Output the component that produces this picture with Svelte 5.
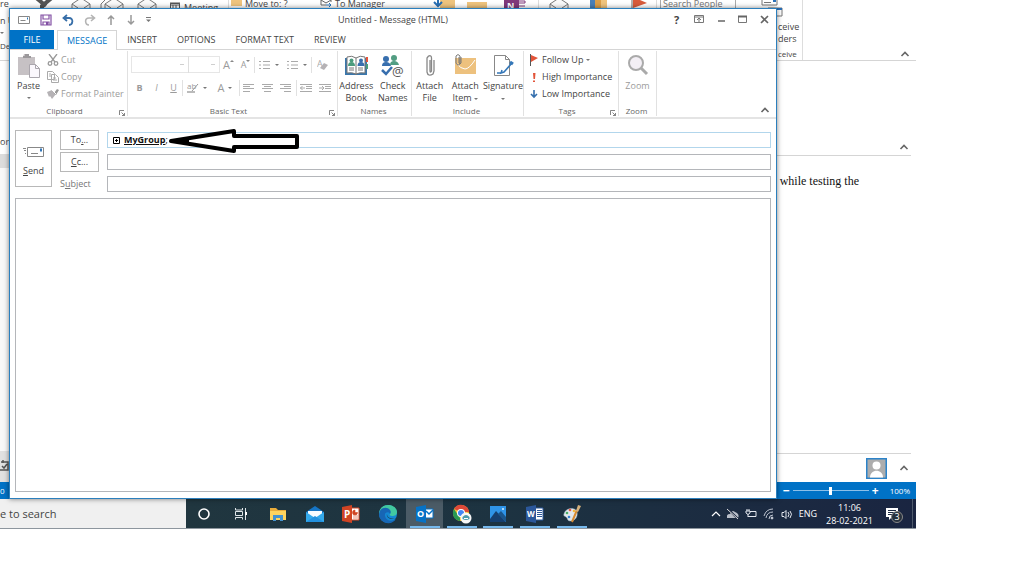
<script lang="ts">
  type App = { name: string; open?: boolean; active?: boolean };

  const tabs = ["MESSAGE", "INSERT", "OPTIONS", "FORMAT TEXT", "REVIEW"];
  const apps: App[] = [
    { name: "Cortana" },
    { name: "Task View" },
    { name: "Explorer" },
    { name: "Mail" },
    { name: "PowerPoint" },
    { name: "Edge" },
    { name: "Outlook", open: true, active: true },
    { name: "Chrome", open: true },
    { name: "Photos", open: true },
    { name: "Word", open: true },
    { name: "Paint", open: true },
  ];

  let cc = $state("");
  let subject = $state("");
  let message = $state("");
  let zoom = $state(50);
</script>

{#snippet caret()}
  <svg class="caret" width="4" height="2" viewBox="0 0 4 2"><path d="M0 0h4L2 2z" fill="#777" /></svg>
{/snippet}

{#snippet chevron()}
  <svg width="10" height="6" viewBox="0 0 10 6"><path d="M1.500 5L5 1.500 8.500 5" fill="none" stroke="currentColor" stroke-width="1.600" /></svg>
{/snippet}

{#snippet launcher()}
  <svg width="6" height="6" viewBox="0 0 6 6" fill="none" stroke="currentColor" stroke-width="0.800"><path d="M.5 5V.5H5M2.500 2.500l3 3M5.500 3v2.500H3" /></svg>
{/snippet}

{#snippet lines(kind: string)}
  <svg width="12" height="10" viewBox="0 0 12 10" fill="none" stroke="#aaa">
    {#if kind === "center"}
      <path d="M0 1.500h11M2 3.500h7M0 5.500h11M2 8.500h7" />
    {:else if kind === "right"}
      <path d="M0 1.500h11M4 3.500h7M0 5.500h11M4 8.500h7" />
    {:else if kind === "left"}
      <path d="M0 1.500h11M0 3.500h7M0 5.500h11M0 8.500h7" />
    {:else if kind === "list"}
      <path d="M0 1.500h2M4 1.500h7M0 5h2M4 5h7M0 8.500h2M4 8.500h7" />
    {:else if kind === "outdent"}
      <path d="M0 1.500h12M6 3.500h6M6 5.500h6M0 8.500h12M0 5h5M2.500 3l-2 2 2 2" />
    {:else}
      <path d="M0 1.500h12M6 3.500h6M6 5.500h6M0 8.500h12M0 5h5M3 3l2 2-2 2" />
    {/if}
  </svg>
{/snippet}

{#snippet appIcon(name: string)}
  <svg width="20" height="20" viewBox="0 0 20 20">
    {#if name === "Cortana"}
      <circle cx="10" cy="10" r="5" fill="none" stroke="#fff" stroke-width="1.600" />
    {:else if name === "Task View"}
      <path d="M4.500 4v2h7V4M4.500 15.500v-2h7v2M4.500 7.500h7v4h-7zM14.500 4v12" fill="none" stroke="#dfe5e8" />
      <path d="M14 8h2v3h-2z" fill="#fff" />
    {:else if name === "Explorer"}
      <path d="M2 4h6l2 2h8v10H2z" fill="#e9ad3b" />
      <path d="M2 7h16v9H2z" fill="#ffd45e" />
      <path d="M5 17v-6h10v6h-3v-3H8v3z" fill="#4593cf" />
    {:else if name === "Mail"}
      <path d="M1 8l9-6 9 6v10H1z" fill="#1675c5" />
      <path d="M3 7h14v7H3z" fill="#f7fbff" />
      <path d="M1 8l9 6 9-6v10H1z" fill="#34a9eb" />
      <path d="M1 18l9-6 9 6z" fill="#2391df" />
    {:else if name === "PowerPoint"}
      <path d="M10 4h8v12h-8z" fill="#fff" stroke="#d04424" />
      <path d="M14 6a2.500 2.500 0 1 0 2.500 2.500H14zM12 12h5M12 14h5" fill="#d04424" stroke="#d04424" stroke-width="0.600" />
      <path d="M1 3l10-2v18L1 17z" fill="#d04424" />
      <text x="3" y="14" font-size="10" font-weight="700" fill="#fff">P</text>
    {:else if name === "Edge"}
      <circle cx="10" cy="10" r="9" fill="#1588d3" />
      <path d="M1 11C1 4 5 1 10 1s9 3 9 7c0 3-2 4-5 4-2 0-3-1-2-2 1-2-1-4-4-3-3 0-6 2-7 4z" fill="#42c8a0" />
      <path d="M1 10c1-7 8-8 11-4 1 1 1 3 0 4-1-3-6-2-5 2 1 5 7 6 11 3-4 7-17 5-17-5z" fill="#1766b5" />
      <path d="M9 10c0 4 4 5 8 4-4 2-9 0-8-4z" fill="#1b3743" />
    {:else if name === "Outlook"}
      <path d="M10 5h8v9h-8z" fill="#fff" stroke="#0672c6" />
      <path d="M11 7l3 3 4-4" fill="none" stroke="#0672c6" stroke-width="1.500" />
      <path d="M1 3l10-2v18L1 17z" fill="#0672c6" />
      <text x="2" y="13" font-size="9" font-weight="700" fill="#fff">O</text>
    {:else if name === "Chrome"}
      <circle cx="9" cy="9" r="8" fill="#f4c12f" />
      <path d="M2 5a8 8 0 0 1 15 3H9z" fill="#df4939" />
      <path d="M2 5l6 9v3A8 8 0 0 1 2 5z" fill="#299954" />
      <circle cx="9" cy="9" r="4" fill="#fff" />
      <circle cx="9" cy="9" r="3" fill="#4285f4" />
      <circle cx="14" cy="14" r="5.500" fill="#f7f7f7" />
      <path d="M10.500 13q3.500-4 7 0v2q-3.500 2-7 0z" fill="#4a9bac" />
      <path d="M12 14.500h4" stroke="#fff" />
    {:else if name === "Photos"}
      <path d="M2 2h16v16H2z" fill="#2f94e8" />
      <path d="M2 15l6-8 10 11H2z" fill="#163f70" />
      <path d="M10 10l3-3 5 6v5z" fill="#1b568c" />
      <circle cx="15" cy="5" r="1" fill="#d8efff" />
    {:else if name === "Word"}
      <path d="M9 4h9v12H9z" fill="#fff" stroke="#2b579a" />
      <path d="M12 6.500h5M12 8.500h5M12 10.500h5M12 12.500h5" stroke="#2b579a" />
      <path d="M1 3l10-2v18L1 17z" fill="#2b579a" />
      <text x="2" y="13" font-size="8" font-weight="700" fill="#fff">W</text>
    {:else}
      <path d="M2 10c1-6 11-8 13-2 1 5-2 9-7 9-3 0-2-3-4-4-1-1-3-1-2-3z" fill="#e3e8ec" stroke="#90acbd" stroke-width="0.500" />
      <circle cx="5" cy="9" r="1.300" fill="#4aae68" /><circle cx="8" cy="6" r="1.300" fill="#e85a47" />
      <circle cx="12" cy="7" r="1.300" fill="#f3b93e" /><circle cx="7" cy="13" r="1.300" fill="#347fd0" />
      <path d="M10 18l5-12" stroke="#d78a31" stroke-width="2" /><path d="M14 7l2-6 3 1-3 6z" fill="#d6b17d" />
    {/if}
  </svg>
{/snippet}

<div class="screen">
  <div class="workspace">
    <div class="outlook">
      <div class="back-ribbon">
        <div class="back-left"><span>re</span><span>n U</span>{@render caret()}<small>De</small></div>
        <svg class="back-delete" width="24" height="10" viewBox="0 0 24 10"><path d="M2-4l12 10M22-4L10 6v6" fill="none" stroke="#555" stroke-width="4" /></svg>
        <svg class="back-envelopes" width="92" height="10" viewBox="0 0 92 10" fill="#fafafa" stroke="#777"><path d="M2 12V4l9-6 9 6v8M2 4l6 4M20 4l-6 4M35 12V4l9-6 9 6v8M31 10V4l5-5M35 4l6 4M53 4l-6 4M68 12V4l9-6 9 6v8M68 4l6 4M86 4l-6 4" /></svg>
        <span class="back-meeting"><svg width="10" height="8" viewBox="0 0 10 8"><path d="M.5 1.500h9V8h-9zM0 1h10v2H0zM3 3v5M6 3v5" fill="none" stroke="#555" /></svg>Meeting</span>
        <span class="back-move"><svg width="11" height="8" viewBox="0 0 11 8"><path d="M0 0h11v6H0z" fill="#efc47e" /></svg>Move to: ?</span>
        <span class="back-manager"><svg width="12" height="8" viewBox="0 0 12 8"><path d="M1 0v5h5M1 0l5 3 5-3v2" fill="none" stroke="#666" /><path d="M6 5h5M9 3l2 2-2 2" fill="none" stroke="#2673b9" /></svg>To Manager</span>
        <svg class="back-icons" width="228" height="10" viewBox="0 0 228 10">
          <path d="M8 0h15v8H8zM35 2h20v6H35z" fill="#efc47e" /><path d="M6 0v6M2 2l4 4 4-4" fill="none" stroke="#286fb4" stroke-width="2" />
          <path d="M72 0h15v10H72z" fill="#80397b" /><text x="75" y="9" font-size="9" font-weight="700" fill="#fff">N</text><path d="M87 1h6v2h-6m0 3h6" fill="none" stroke="#80397b" />
          <path d="M118 10V4l9-6 9 6v6M118 4l6 4M136 4l-6 4" fill="#fafafa" stroke="#777" />
          <path d="M158 0h5v10h-5z" fill="#4a80b8" /><path d="M163 0h6v10h-6z" fill="#dc9f49" /><path d="M169 0h6v10h-6z" fill="#efc47e" />
          <path d="M200 0v10" stroke="#666" /><path d="M201-3l14 6-14 5z" fill="#d85b3c" /><path d="M106.500 0v10M224.500 0v10" stroke="#ddd" />
        </svg>
        <input class="people-search" aria-label="Search People" placeholder="Search People" />
        <div class="back-receive">
          <svg width="22" height="17" viewBox="0 0 22 17"><path d="M1 0v5h15V0M3 2.500h7M7 8v8h14V8z" fill="#fff" stroke="#777" /><path d="M12 1h3M7 9h14" stroke="#2b70b8" stroke-width="2" /></svg>
          <span>ceive</span><span>ders</span><small>ceive</small>
        </div>
        <button class="collapse" aria-label="Collapse">{@render chevron()}</button>
      </div>
      <div class="back-main">
        <div class="folders"><span>or</span></div>
        <article>
          <header><button class="collapse" aria-label="Collapse">{@render chevron()}</button></header>
          <p>while testing the</p>
          <footer>
            <svg class="avatar" width="21" height="21" viewBox="0 0 21 21"><path d="M0 0h21v21H0z" fill="#2c83c9" /><path d="M1.500 1.500h18v18h-18z" fill="#adadad" /><circle cx="10.500" cy="7.500" r="4" fill="#fff" /><path d="M4 19.500c0-9 13-9 13 0z" fill="#fff" /></svg>
            <button class="collapse" aria-label="Expand">{@render chevron()}</button>
          </footer>
        </article>
      </div>
      <div class="nav-icon"><svg width="10" height="12" viewBox="0 0 10 12"><path d="M1 2h7v8H0M2 6l2 2 3-4M3 0v3" fill="none" stroke="#555" stroke-width="1.500" /></svg></div>
      <div class="status"><span class="count">0</span><b>−</b><input type="range" aria-label="Zoom level" bind:value={zoom} /><b>+</b><span>100%</span></div>
    </div>

    <main class="compose">
      <header class="titlebar">
        <div class="quick">
          <svg width="12" height="10" viewBox="0 0 12 10" fill="none" stroke="#888"><path d="M.5 1.500h11v7H.5zM2.500 5.500h5" /><path d="M9 3.500h1" stroke="#2474b9" stroke-width="2" /></svg>
          <button aria-label="Save"><svg width="12" height="12" viewBox="0 0 12 12"><path d="M1 1h10v10H1zM3 1v4h6V1M3 11V8h6v3" fill="none" stroke="#8351a4" stroke-width="1.200" /><path d="M6 8h2v3H6z" fill="#8351a4" /></svg></button>
          <button aria-label="Undo"><svg width="12" height="12" viewBox="0 0 12 12" fill="none" stroke="#386fa9" stroke-width="1.800"><path d="M5 1L1.500 4 5 7M2 4h5c5 0 4 7 0 7" /></svg></button>
          <button aria-label="Redo"><svg width="12" height="12" viewBox="0 0 12 12" fill="none" stroke="#b4b4b4" stroke-width="1.600"><path d="M7 1l3.500 3L7 7M10 4H5c-5 0-4 7 0 7" /></svg></button>
          <button aria-label="Previous"><svg width="10" height="12" viewBox="0 0 10 12" fill="none" stroke="#999" stroke-width="1.500"><path d="M5 11V2M2 5l3-3 3 3" /></svg></button>
          <button aria-label="Next"><svg width="10" height="12" viewBox="0 0 10 12" fill="none" stroke="#999" stroke-width="1.500"><path d="M5 1v9M2 7l3 3 3-3" /></svg></button>
          <button aria-label="Customize"><svg width="5" height="5" viewBox="0 0 5 5"><path d="M0 .5h5" stroke="#777" /><path d="M0 2.500h5L2.500 5z" fill="#777" /></svg></button>
        </div>
        <h1>Untitled - Message (HTML)</h1>
        <div class="window-buttons">
          <button aria-label="Help"><b>?</b></button>
          <button aria-label="Ribbon options"><svg width="10" height="9" viewBox="0 0 10 9" fill="none" stroke="#777"><path d="M.5.5h9v7h-9zM0 2h10M3 5l2-2 2 2M5 3v4" /></svg></button>
          <button aria-label="Minimize"><svg width="8" height="9" viewBox="0 0 8 9"><path d="M1 6h7" stroke="#666" stroke-width="1.500" /></svg></button>
          <button aria-label="Maximize"><svg width="9" height="9" viewBox="0 0 9 9"><path d="M.5 1v6.500h8V1" fill="none" stroke="#777" /><path d="M0 1.500h9" stroke="#666" stroke-width="2" /></svg></button>
          <button aria-label="Close"><svg width="9" height="9" viewBox="0 0 9 9"><path d="M1 1l7 7M8 1L1 8" stroke="#666" stroke-width="1.600" /></svg></button>
        </div>
      </header>

      <nav>
        <button class="file">FILE</button>
        {#each tabs as tab, i}
          <button class="tab" class:selected={i === 0}>{tab}</button>
        {/each}
      </nav>

      <section class="ribbon">
        <div class="group clipboard">
          <div class="tools disabled">
            <button class="large paste">
              <svg width="22" height="24" viewBox="0 0 22 24"><path d="M0 3h5l1-3h4l1 3h6v18H0z" fill="#c6c1c4" /><path d="M5 4V2h2V0h4v2h2v2z" fill="#9b989b" /><path d="M11.500 10.500h6l4 4v9h-10z" fill="#faf7fc" stroke="#aaa6ad" /><path d="M17.500 10.500v4h4" fill="none" stroke="#aaa6ad" /></svg>
              <span>Paste</span>{@render caret()}
            </button>
            <div class="stack">
              <button><svg width="12" height="12" viewBox="0 0 12 12" fill="none" stroke="#999" stroke-width="1.300"><path d="M2 0l6 8M10 0L4 8" /><circle cx="3" cy="9.500" r="1.800" /><circle cx="9" cy="9.500" r="1.800" /></svg>Cut</button>
              <button><svg width="12" height="12" viewBox="0 0 12 12" fill="#fff" stroke="#aaa"><path d="M.5.5h5l2 2v6h-7zM4.500 3.500h4l3 3v5h-7zM2 3h2M2 5h2M6 7h3M6 9h4" /></svg>Copy</button>
              <button><svg width="12" height="12" viewBox="0 0 12 12"><path d="M0 4l5-2 4 4-4 5-2-3-1 1z" fill="#b5b2b5" /><path d="M7 5l3-4 2 1-3 5z" fill="#999" /><path d="M5 2l4 4" stroke="#fff" /></svg>Format Painter</button>
            </div>
          </div>
          <div class="caption"><span>Clipboard</span>{@render launcher()}</div>
        </div>

        <div class="group basic">
          <div class="tools disabled text-tools">
            <div class="row">
              <select class="font" aria-label="Font" disabled><option></option></select><select class="size" aria-label="Font size" disabled><option></option></select>
              <button class="letter glyph" aria-label="Grow font">A<svg width="4" height="10" viewBox="0 0 4 10"><path d="M0 2h4L2 0z" fill="#888" /></svg></button>
              <button class="letter glyph small" aria-label="Shrink font">A<svg width="4" height="10" viewBox="0 0 4 10"><path d="M0 0h4L2 2z" fill="#888" /></svg></button>
              <i></i><button class="wide" aria-label="Bullets">{@render lines("list")}{@render caret()}</button><button class="wide" aria-label="Numbering">{@render lines("list")}{@render caret()}</button><i></i>
              <button aria-label="Clear formatting"><svg width="12" height="12" viewBox="0 0 12 12"><text x="0" y="8" font-size="9" fill="#aaa">A</text><path d="M3 9l4-5 4 2-4 5z" fill="#b5b2b5" /></svg></button>
            </div>
            <div class="row">
              <button class="letter"><b>B</b></button><button class="letter"><em>I</em></button><button class="letter"><u>U</u></button><i></i>
              <button class="wide" aria-label="Highlight"><svg width="12" height="12" viewBox="0 0 12 12"><text x="0" y="7" font-size="8" fill="#999">ab</text><path d="M11 2L5 9" stroke="#999" /><path d="M0 10h8" stroke="#bbb" stroke-width="2" /></svg>{@render caret()}</button>
              <button class="wide glyph"><span>A</span>{@render caret()}</button><i></i>
              <button aria-label="Align left">{@render lines("left")}</button><button aria-label="Center">{@render lines("center")}</button><button aria-label="Align right">{@render lines("right")}</button><i></i>
              <button aria-label="Decrease indent">{@render lines("outdent")}</button><button aria-label="Increase indent">{@render lines("indent")}</button>
            </div>
          </div>
          <div class="caption"><span>Basic Text</span>{@render launcher()}</div>
        </div>

        <div class="group names">
          <div class="tools">
            <button class="large"><svg width="24" height="24" viewBox="0 0 24 24"><path d="M1 4h22v17H1z" fill="#3a77ac" /><path d="M3 3q5-2 9 1 4-3 9-1v16q-5-1-9 1-4-2-9-1z" fill="#fff" stroke="#777" /><path d="M12 4v17M5 14h5M5 16h5M14 14h5M14 16h5" stroke="#777" /><circle cx="7.500" cy="6.500" r="2" fill="#4b9c7d" /><path d="M4 12q0-4 3.500-4t3.500 4z" fill="#4b9c7d" /><circle cx="17" cy="6.500" r="2" fill="#386fae" /><path d="M13.500 12q0-4 3.500-4t3.500 4z" fill="#386fae" /><path d="M23 3v5" stroke="#e3533b" stroke-width="2" /><path d="M23 10v5" stroke="#4b9c7d" stroke-width="2" /></svg><span>Address<br />Book</span></button>
            <button class="large"><svg width="24" height="24" viewBox="0 0 24 24"><circle cx="5" cy="5" r="3" fill="#386fae" /><path d="M1 12q0-4 4-4t5 4z" fill="#386fae" /><circle cx="13" cy="4" r="3" fill="#529d82" /><path d="M9 11q0-4 4-4t5 4z" fill="#529d82" /><path d="M1 16l4 4 6-7" fill="none" stroke="#386fae" stroke-width="2.500" /><text x="11" y="22" font-size="13" fill="#555">@</text></svg><span>Check<br />Names</span></button>
          </div>
          <div class="caption"><span>Names</span></div>
        </div>

        <div class="group include">
          <div class="tools">
            <button class="large"><svg width="24" height="24" viewBox="0 0 24 24" fill="none" stroke="#888" stroke-width="1.300"><path d="M12 6v11q0 2 1.500 0V4q0-3-3-2L9 4v14q1 5 6 2l1-3V6" /></svg><span>Attach<br />File</span></button>
            <button class="large"><svg width="24" height="24" viewBox="0 0 24 24" fill="none"><path d="M2 4h21v16H2z" fill="#edc17e" /><path d="M3 9q5 6 9 6t10-9" stroke="#fff" /><path d="M6 3v6q1 2 1-1V2q-2-3-4 0v7q2 4 5 0V3" stroke="#777" /></svg><span>Attach<br />Item {@render caret()}</span></button>
            <button class="large"><svg width="24" height="24" viewBox="0 0 24 24" fill="none"><path d="M3.500 1.500h11l4 4v16h-15zM14.500 1.500v4h4" fill="#fff" stroke="#888" /><path d="M21 9l-8 9-3 1 1-3M6 19h5" stroke="#3477b8" stroke-width="1.500" /><path d="M19 8l3 2" stroke="#3477b8" stroke-width="3" /></svg><span>Signature<br />{@render caret()}</span></button>
          </div>
          <div class="caption"><span>Include</span></div>
        </div>

        <div class="group tags">
          <div class="tools stack">
            <button><svg width="8" height="12" viewBox="0 0 8 12"><path d="M.5 0v12" stroke="#555" /><path d="M1 1l7 3-7 4z" fill="#e25439" /></svg><span>Follow Up {@render caret()}</span></button>
            <button><svg width="8" height="12" viewBox="0 0 8 12"><path d="M3 2h2.500L5 8H3.500zM3 9.500h2V11H3z" fill="#e25439" /></svg>High Importance</button>
            <button><svg width="8" height="12" viewBox="0 0 8 12"><path d="M4 2v7M1 6l3 3 3-3" fill="none" stroke="#356fad" stroke-width="1.600" /></svg>Low Importance</button>
          </div>
          <div class="caption"><span>Tags</span>{@render launcher()}</div>
        </div>

        <div class="group zoom">
          <div class="tools disabled">
            <button class="large"><svg width="24" height="24" viewBox="0 0 24 24"><circle cx="10" cy="9" r="7" fill="#f3eff5" stroke="#aaa" stroke-width="2" /><path d="M15 14l6 6" stroke="#aaa" stroke-width="3" /></svg><span>Zoom</span></button>
          </div>
          <div class="caption"><span>Zoom</span></div>
        </div>
        <button class="collapse" aria-label="Collapse ribbon">{@render chevron()}</button>
      </section>

      <form>
        <div class="address">
          <button type="button" class="send">
            <svg width="22" height="14" viewBox="0 0 22 14" fill="none" stroke="#888"><path d="M4.500 2.500h16v9h-16zM8 8.500h7M0 3.500h3M1 5.500h2M2 8.500h1" /><path d="M17 5h2" stroke="#3477b8" stroke-width="3" /></svg>
            <span><u>S</u>end</span>
          </button>
          <button type="button" class="pick">To<u>.</u>..</button>
          <div class="field recipients">
            <button type="button" class="expand" aria-label="Expand group"><svg width="7" height="7" viewBox="0 0 7 7"><path d="M.5.5h6v6h-6zM2 3.500h3M3.500 2v3" fill="none" stroke="#000" /></svg></button>
            <b>MyGroup</b>;
            <input aria-label="To" />
            <svg class="pointer" width="134" height="26" viewBox="0 0 134 26"><path d="M4 13L67 3v5h63v11H67v4z" fill="#fff" stroke="#000" stroke-width="4" stroke-linejoin="round" /><path d="M4 13l18-3v6z" /></svg>
          </div>
          <button type="button" class="pick"><u>C</u>c...</button>
          <input class="field" aria-label="Cc" bind:value={cc} />
          <label for="subject">S<u>u</u>bject</label>
          <input class="field" id="subject" bind:value={subject} />
        </div>
        <textarea aria-label="Message" bind:value={message}></textarea>
      </form>
    </main>
  </div>

  <footer class="taskbar">
    <button class="search">e to search</button>
    <div class="apps">
      {#each apps as app}
        <button class:open={app.open} class:active={app.active} aria-label={app.name}>{@render appIcon(app.name)}</button>
      {/each}
    </div>
    <div class="tray">
      <svg width="10" height="12" viewBox="0 0 10 12"><path d="M1 8l4-4 4 4" fill="none" stroke="#fff" stroke-width="1.200" /></svg>
      <svg width="12" height="12" viewBox="0 0 12 12"><path d="M0 10q-1-4 3-4 2-5 5-2 5 2 3 6z" fill="#b8bec8" /><path d="M1 1l10 10" stroke="#1b2942" stroke-width="2" /><path d="M0 1l11 10" stroke="#ddd" /></svg>
      <svg width="12" height="12" viewBox="0 0 12 12" fill="none" stroke="#e4e8ef"><path d="M5 3.500h6v5H3M2 1v2M4 1v2M1 3h4v2q-2 3-4 0zM3 6v3" /></svg>
      <svg width="12" height="12" viewBox="0 0 12 12" fill="none" stroke="#bdc4d0"><path d="M1 8q2-7 9-7M3 10q1-6 7-6M6 11q0-4 4-4" /><circle cx="9" cy="10" r="1" fill="#fff" /></svg>
      <svg width="12" height="12" viewBox="0 0 12 12" fill="none" stroke="#e4e8ef"><path d="M1 4.500h2l2-2v8l-2-2H1zM7 4q2 2 0 5M9 3q3 3 0 7" /></svg>
      <span>ENG</span>
      <time>11:06<br />28-02-2021</time>
      <button class="notice" aria-label="Notifications"><svg width="14" height="14" viewBox="0 0 14 14"><path d="M1 1h12v9H7l-3 3v-3H1z" fill="#fff" /><path d="M3 3.500h8M3 5.500h8M3 7.500h5" stroke="#1b2942" /></svg><span>3</span></button>
    </div>
  </footer>
</div>

<style>
  :global(body) {
    margin: 0;
    background: #fff;
  }

  .screen {
    box-sizing: border-box;
    display: flex;
    flex-direction: column;
    min-height: 100vh;
    padding: 0 108px 46px 0;
    font: 9px/12px "Open Sans", "Noto Sans", sans-serif;
    color: #444;
  }

  .screen * {
    box-sizing: border-box;
  }

  svg {
    flex: none;
  }

  button {
    display: flex;
    align-items: center;
    padding: 0;
    border: 0;
    background: none;
    color: inherit;
    font: inherit;
  }

  input,
  select,
  textarea {
    min-width: 0;
    border: 0;
    padding: 0;
    outline: 0;
    background: #fff;
    color: inherit;
    font: inherit;
  }

  .workspace {
    position: relative;
    display: flex;
    flex: 1;
  }

  /* main mail window, mostly covered by the message */
  .outlook {
    flex: 1;
    display: flex;
    flex-direction: column;
    min-width: 0;
  }

  .back-ribbon {
    display: flex;
    height: 61px;
    overflow: hidden;
    border-bottom: 1px solid #d5d5d5;
    white-space: nowrap;
  }

  .back-left {
    flex: 0 0 32px;
    display: flex;
    flex-direction: column;
    gap: 6px;
    line-height: 11px;
  }

  .back-left span:first-child {
    margin-top: -2px;
  }

  small {
    font-size: 8px;
  }

  .back-envelopes {
    margin: 0 8px 0 14px;
  }

  .back-meeting {
    flex: 0 0 58px;
    padding-top: 2px;
  }

  .back-move {
    flex: 0 0 92px;
    border-left: 1px solid #ddd;
    padding-left: 2px;
  }

  .back-manager {
    flex: 0 0 112px;
  }

  .back-move,
  .back-manager {
    height: 10px;
    line-height: 8px;
  }

  .back-ribbon span svg {
    margin-right: 3px;
    vertical-align: top;
  }

  .back-ribbon .back-meeting svg {
    margin-right: 4px;
  }

  .people-search {
    flex: 0 0 76px;
    height: 14px;
    margin-top: -4px;
    border: 1px solid #aaa;
    padding-left: 2px;
    line-height: 10px;
  }

  .back-receive {
    flex: 1;
    display: flex;
    flex-direction: column;
    max-width: 66px;
    margin-left: 1px;
    padding-left: 24px;
    border-right: 1px solid #ddd;
  }

  .back-receive span,
  .back-receive small {
    padding-left: 17px;
  }

  .back-receive span {
    padding-top: 4px;
    line-height: 8px;
  }

  .back-receive span:first-of-type {
    padding-top: 6px;
  }

  .back-receive small {
    padding-top: 5px;
  }

  .collapse {
    align-self: flex-end;
    margin-left: auto;
    padding: 4px 6px 3px;
    color: #666;
  }

  .back-main {
    flex: 1;
    display: flex;
  }

  .folders {
    flex: 0 0 10px;
    padding-top: 75px;
    overflow: hidden;
    background: linear-gradient(#fff 93px, #dcdcdc 93px 107px, #f8f8f8 107px);
  }

  article {
    flex: 1;
    display: flex;
    flex-direction: column;
    padding: 77px 5px 0 0;
  }

  article header,
  article footer {
    display: flex;
    align-items: center;
    justify-content: flex-end;
  }

  article header {
    height: 18px;
    border-bottom: 1px solid #d5d5d5;
  }

  article p {
    flex: 1;
    align-self: flex-end;
    margin: 17px 52px 0 0;
    font: 12px/16px "Liberation Serif", serif;
    color: #111;
  }

  article footer {
    height: 29px;
    border-top: 1px solid #d5d5d5;
  }

  article header .collapse,
  article footer .collapse {
    align-self: center;
    margin-left: 10px;
    padding: 2px;
  }

  .nav-icon {
    position: absolute;
    left: 0;
    bottom: 17px;
    width: 10px;
    height: 31px;
    padding-top: 9px;
    background: #e1e1e1;
  }

  .status {
    display: flex;
    align-items: center;
    justify-content: flex-end;
    gap: 3px;
    height: 17px;
    padding-right: 6px;
    background: #0072c6;
    color: #fff;
    font-size: 8px;
  }

  .status b {
    font-size: 12px;
  }

  .status b:last-of-type {
    margin-right: 8px;
  }

  .count {
    margin-right: auto;
  }

  input[type="range"] {
    appearance: none;
    width: 76px;
    height: 10px;
    margin: 0;
    background: linear-gradient(#8bc0e9, #8bc0e9) center / 100% 1px no-repeat;
  }

  input[type="range"]::-webkit-slider-thumb {
    appearance: none;
    width: 3px;
    height: 8px;
    background: #fff;
  }

  /* message window */
  .compose {
    position: absolute;
    inset: 8px 139px 0 9px;
    display: flex;
    flex-direction: column;
    border: 1px solid #2b7fbd;
    box-shadow: 0 0 5px rgb(0 0 0 / 50%);
    background: #fff;
  }

  .titlebar {
    display: grid;
    grid-template-columns: 1fr auto 1fr;
    align-items: center;
    height: 21px;
  }

  .quick,
  .window-buttons {
    display: flex;
    align-items: center;
  }

  .quick {
    gap: 10px;
    padding-left: 8px;
  }

  h1 {
    margin: 0;
    font-size: 9px;
    font-weight: 400;
  }

  .window-buttons {
    justify-content: flex-end;
    gap: 1px;
    padding-right: 1px;
  }

  .window-buttons button {
    justify-content: center;
    width: 21px;
    font-size: 11px;
  }

  nav {
    display: flex;
    height: 19px;
  }

  nav button {
    justify-content: center;
  }

  .file {
    width: 44px;
    margin-right: 3px;
    background: #0072c6;
    color: #fff;
  }

  .tab {
    padding: 0 10px;
  }

  .tab.selected {
    z-index: 1;
    height: 20px;
    padding: 0 9px;
    border: 1px solid #d5d5d5;
    border-bottom: 0;
    background: #fff;
    color: #0072c6;
  }

  .ribbon {
    display: flex;
    height: 70px;
    padding: 1px 0;
    border-top: 1px solid #d5d5d5;
    border-bottom: 2px solid #e4e4e4;
  }

  .group {
    display: flex;
    flex-direction: column;
    border-right: 1px solid #e1e1e1;
  }

  .clipboard {
    width: 118px;
  }

  .basic {
    width: 210px;
  }

  .names {
    width: 74px;
  }

  .include {
    width: 112px;
  }

  .tags {
    width: 95px;
  }

  .zoom {
    width: 38px;
  }

  .tools {
    flex: 1;
    display: flex;
    justify-content: center;
  }

  .disabled {
    color: #9b9b9b;
  }

  .large {
    flex: 1;
    flex-direction: column;
    justify-content: flex-start;
    gap: 2px;
    padding-top: 3px;
    text-align: center;
  }

  .large.paste {
    flex: 0 0 37px;
    color: #444;
  }

  .large.paste span {
    margin-bottom: 3px;
  }

  .stack {
    flex: 1;
    display: flex;
    flex-direction: column;
    justify-content: flex-start;
  }

  .stack button {
    gap: 2px;
    height: 17px;
    white-space: nowrap;
  }

  .stack.tools button {
    gap: 4px;
    padding-left: 6px;
  }

  .caret {
    display: inline-block;
    vertical-align: middle;
  }

  .caption {
    display: flex;
    align-items: flex-end;
    height: 10px;
    padding-right: 2px;
    font-size: 8px;
    line-height: 10px;
    color: #666;
  }

  .caption span {
    flex: 1;
    text-align: center;
  }

  .text-tools {
    flex-direction: column;
    justify-content: flex-start;
  }

  .row {
    display: flex;
    align-items: center;
    height: 23px;
    padding: 4px 3px 0;
  }

  .row button {
    flex: 1;
    justify-content: center;
    gap: 4px;
  }

  .row .letter {
    flex: 0 0 17px;
    gap: 0;
  }

  .row .wide {
    flex: 0 0 28px;
  }

  .row i {
    width: 1px;
    height: 16px;
    background: #e1e1e1;
  }

  .row .glyph {
    font-size: 11px;
  }

  .row .small {
    font-size: 9px;
  }

  select {
    appearance: none;
    height: 17px;
    border: 1px solid #dcdcdc;
    background: linear-gradient(#bbb, #bbb) right 4px center / 4px 1px no-repeat;
  }

  .font {
    width: 58px;
  }

  .size {
    width: 32px;
    margin-left: -1px;
  }

  form {
    flex: 1;
    display: flex;
    flex-direction: column;
    gap: 4px;
    padding: 11px 5px 6px;
  }

  .address {
    display: grid;
    grid-template-columns: 37px 39px 1fr;
    grid-template-rows: repeat(3, 20px);
    gap: 2px 8px;
    align-items: center;
  }

  .send {
    grid-row: 1 / 4;
    align-self: start;
    flex-direction: column;
    justify-content: center;
    gap: 6px;
    height: 57px;
    padding-top: 4px;
    border: 1px solid #b8b8b8;
  }

  .pick {
    justify-content: center;
    height: 20px;
    border: 1px solid #b8b8b8;
  }

  label {
    color: #777;
  }

  .field {
    width: 100%;
    height: 16px;
    border: 1px solid #b4b6ba;
    padding: 0 5px;
  }

  .recipients {
    position: relative;
    display: flex;
    align-items: center;
    border-color: #b2d6ec;
    color: #111;
  }

  .recipients b {
    margin-left: 4px;
    text-decoration: underline;
  }

  .recipients input {
    flex: 1;
    height: 12px;
  }

  .pointer {
    position: absolute;
    top: -5px;
    left: 59px;
  }

  textarea {
    flex: 1;
    resize: none;
    border: 1px solid #b4b6ba;
  }

  .taskbar {
    display: flex;
    height: 30px;
    border-bottom: 1px solid #8d969e;
    background: linear-gradient(90deg, #20363f 20%, #1d3341 55%, #1a2541);
    color: #fff;
  }

  .search {
    flex: 0 0 186px;
    background: #f0f0f0;
    color: #444;
    font-size: 11px;
  }

  .apps {
    flex: 0 0 404px;
    display: flex;
  }

  .apps button {
    flex: 1;
    justify-content: center;
  }

  .apps .open {
    background: linear-gradient(#76b9ed, #76b9ed) center bottom / 30px 2px no-repeat;
  }

  .apps .active {
    background-color: #4b5b66;
  }

  .tray {
    display: flex;
    align-items: center;
    gap: 6px;
    margin-left: auto;
    margin-right: 3px;
    padding-right: 13px;
    border-right: 1px solid #4e5a6c;
  }

  time {
    margin: 0 6px 0 3px;
    line-height: 13px;
    text-align: center;
  }

  .notice {
    position: relative;
  }

  .notice span {
    position: absolute;
    top: 4px;
    left: 6px;
    width: 12px;
    height: 12px;
    border: 1px solid #888;
    border-radius: 50%;
    background: #27313d;
    line-height: 10px;
  }
</style>
